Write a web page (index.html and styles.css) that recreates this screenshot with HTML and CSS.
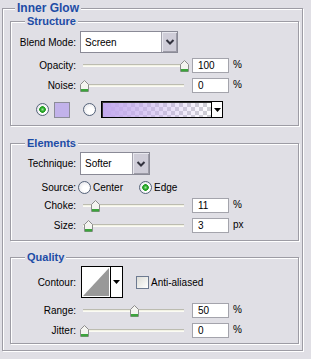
FILE: index.html
```html
<!DOCTYPE html>
<html lang="en">
<head>
    <meta charset="UTF-8">
    <meta name="viewport" content="width=device-width, initial-scale=1.0">
    <title>Inner Glow</title>
    <link rel="stylesheet" href="styles.css">
</head>
<body>
    <fieldset class="group outer">
        <legend class="outer-title">Inner Glow</legend>

        <!-- Structure -->
        <fieldset class="group inner structure">
            <legend>Structure</legend>

            <div class="row row-blend">
                <span class="lbl">Blend Mode:</span>
                <div class="select select-blend">
                    <span class="select-text">Screen</span>
                    <span class="select-btn">
                        <svg width="10" height="8" viewBox="0 0 10 8"><polyline points="1.5,2 5,5.5 8.5,2" fill="none" stroke="#33333f" stroke-width="2"/></svg>
                    </span>
                </div>
            </div>

            <div class="row row-slider">
                <span class="lbl">Opacity:</span>
                <div class="slider">
                    <div class="track"></div>
                    <svg class="thumb" style="left: 99.5px" width="9" height="12" viewBox="0 0 9 12"><polygon points="0.5,4.5 4.5,0.5 8.5,4.5 8.5,11.5 0.5,11.5" fill="#f4f4f0" stroke="#8c8c8c"/><rect x="1" y="9" width="7" height="2.5" fill="#3ca33c"/></svg>
                </div>
                <span class="num">100</span>
                <span class="unit">%</span>
            </div>

            <div class="row row-slider">
                <span class="lbl">Noise:</span>
                <div class="slider">
                    <div class="track"></div>
                    <svg class="thumb" style="left: -0.5px" width="9" height="12" viewBox="0 0 9 12"><polygon points="0.5,4.5 4.5,0.5 8.5,4.5 8.5,11.5 0.5,11.5" fill="#f4f4f0" stroke="#8c8c8c"/><rect x="1" y="9" width="7" height="2.5" fill="#3ca33c"/></svg>
                </div>
                <span class="num">0</span>
                <span class="unit">%</span>
            </div>

            <div class="row row-color">
                <span class="radio checked"></span>
                <span class="swatch"></span>
                <span class="radio radio-gradient"></span>
                <div class="gradient">
                    <span class="gradient-fill"></span>
                    <span class="drop">
                        <svg width="7" height="4" viewBox="0 0 7 4"><polygon points="0,0 7,0 3.5,4" fill="#000"/></svg>
                    </span>
                </div>
            </div>
        </fieldset>

        <!-- Elements -->
        <fieldset class="group inner elements">
            <legend>Elements</legend>

            <div class="row row-technique">
                <span class="lbl">Technique:</span>
                <div class="select select-technique">
                    <span class="select-text">Softer</span>
                    <span class="select-btn">
                        <svg width="10" height="8" viewBox="0 0 10 8"><polyline points="1.5,2 5,5.5 8.5,2" fill="none" stroke="#33333f" stroke-width="2"/></svg>
                    </span>
                </div>
            </div>

            <div class="row row-source">
                <span class="lbl lbl-source">Source:</span>
                <span class="radio"></span>
                <span class="opt">Center</span>
                <span class="radio checked radio-edge"></span>
                <span class="opt">Edge</span>
            </div>

            <div class="row row-slider">
                <span class="lbl">Choke:</span>
                <div class="slider">
                    <div class="track"></div>
                    <svg class="thumb" style="left: 10.5px" width="9" height="12" viewBox="0 0 9 12"><polygon points="0.5,4.5 4.5,0.5 8.5,4.5 8.5,11.5 0.5,11.5" fill="#f4f4f0" stroke="#8c8c8c"/><rect x="1" y="9" width="7" height="2.5" fill="#3ca33c"/></svg>
                </div>
                <span class="num">11</span>
                <span class="unit">%</span>
            </div>

            <div class="row row-slider">
                <span class="lbl">Size:</span>
                <div class="slider">
                    <div class="track"></div>
                    <svg class="thumb" style="left: 3.5px" width="9" height="12" viewBox="0 0 9 12"><polygon points="0.5,4.5 4.5,0.5 8.5,4.5 8.5,11.5 0.5,11.5" fill="#f4f4f0" stroke="#8c8c8c"/><rect x="1" y="9" width="7" height="2.5" fill="#3ca33c"/></svg>
                </div>
                <span class="num">3</span>
                <span class="unit">px</span>
            </div>
        </fieldset>

        <!-- Quality -->
        <fieldset class="group inner quality">
            <legend>Quality</legend>

            <div class="row row-contour">
                <span class="lbl">Contour:</span>
                <div class="contour">
                    <svg class="contour-curve" width="28" height="30" viewBox="0 0 28 30"><rect width="28" height="30" fill="#fff"/><polygon points="1,29 27,1 27,29" fill="#999"/></svg>
                    <span class="drop drop-contour">
                        <svg width="7" height="4" viewBox="0 0 7 4"><polygon points="0,0 7,0 3.5,4" fill="#000"/></svg>
                    </span>
                </div>
                <span class="check"></span>
                <span class="opt">Anti-aliased</span>
            </div>

            <div class="row row-slider">
                <span class="lbl">Range:</span>
                <div class="slider">
                    <div class="track"></div>
                    <svg class="thumb" style="left: 49.5px" width="9" height="12" viewBox="0 0 9 12"><polygon points="0.5,4.5 4.5,0.5 8.5,4.5 8.5,11.5 0.5,11.5" fill="#f4f4f0" stroke="#8c8c8c"/><rect x="1" y="9" width="7" height="2.5" fill="#3ca33c"/></svg>
                </div>
                <span class="num">50</span>
                <span class="unit">%</span>
            </div>

            <div class="row row-slider">
                <span class="lbl">Jitter:</span>
                <div class="slider">
                    <div class="track"></div>
                    <svg class="thumb" style="left: -0.5px" width="9" height="12" viewBox="0 0 9 12"><polygon points="0.5,4.5 4.5,0.5 8.5,4.5 8.5,11.5 0.5,11.5" fill="#f4f4f0" stroke="#8c8c8c"/><rect x="1" y="9" width="7" height="2.5" fill="#3ca33c"/></svg>
                </div>
                <span class="num">0</span>
                <span class="unit">%</span>
            </div>
        </fieldset>
    </fieldset>
</body>
</html>
```

FILE: styles.css
```css
body {
    margin: 0;
    padding-top: 2px;
    background-color: #e0dfe5;
    color: #000;
    font-family: 'Liberation Sans', Arial, sans-serif;
    font-size: 10px;
    width: 311px;
    height: 359px;
    box-sizing: border-box;
    overflow: hidden;
}

.group {
    margin: 0;
    min-width: 0;
    border: 1px solid #9d9ca4;
    box-shadow: inset 1px 1px 0 #fff, 1px 1px 0 #fff;
    box-sizing: border-box;
}

.group legend {
    padding: 0 2px;
    margin-left: 14px;
    line-height: 13px;
    height: 13px;
    font-size: 11px;
    font-weight: bold;
    color: #1d4ca6;
    background: #e0dfe5;
}

.outer {
    margin-left: 2px;
    width: 301px;
    padding: 0 3px 6px 7px;
}

.group .outer-title {
    margin-left: 5px;
    font-size: 12px;
}

.inner {
    width: 289px;
    padding: 0;
}

.structure {
    padding-bottom: 7px;
}

.elements {
    margin-top: 11px;
    padding-bottom: 7px;
}

.quality {
    margin-top: 10px;
    padding-bottom: 5px;
}

.row {
    display: flex;
    align-items: center;
}

.lbl {
    flex: none;
    width: 65px;
    margin-right: 4px;
    text-align: right;
    white-space: nowrap;
}

/* rows */
.row-blend {
    margin-top: 3px;
    height: 22px;
}

.row-slider {
    margin-top: 5px;
    height: 15px;
}

.row-color {
    margin-top: 8px;
    height: 17px;
    padding-left: 25px;
}

.row-technique {
    margin-top: 2px;
    height: 23px;
}

.row-source {
    margin-top: 5px;
    height: 14px;
}

.row-source + .row-slider {
    margin-top: 4px;
}

.row-contour {
    margin-top: 2px;
    height: 32px;
}

/* select */
.select {
    display: flex;
    height: 100%;
    box-sizing: border-box;
    border: 1px solid #8a8a96;
    background: #fff;
}

.select-blend {
    width: 98px;
}

.select-technique {
    width: 70px;
}

.select-text {
    flex: 1;
    padding-left: 4px;
    display: flex;
    align-items: center;
}

.select-btn {
    width: 15px;
    display: flex;
    align-items: center;
    justify-content: center;
    background: #cfcdd8;
    border-left: 1px solid #a4a3ae;
    box-shadow: inset 1px 1px 0 #e8e8ee, inset -1px -1px 0 #9c9ba6;
}

.select-technique .select-btn {
    width: 16px;
}

/* sliders */
.slider {
    position: relative;
    flex: none;
    width: 112px;
    height: 15px;
}

.track {
    position: absolute;
    left: 3px;
    top: 6px;
    width: 101px;
    height: 1px;
    border-top: 1px solid #bcbcb0;
    border-bottom: 1px solid #fbfbf4;
    background: #f2f2e4;
}

.thumb {
    position: absolute;
    top: 2px;
}

.num {
    flex: none;
    width: 37px;
    height: 15px;
    box-sizing: border-box;
    border: 1px solid #a4a4ac;
    background: #fff;
    padding-left: 5px;
    line-height: 13px;
}

.unit {
    margin-left: 4px;
    margin-top: -3px;
}

/* radios, swatches */
.radio {
    flex: none;
    width: 13px;
    height: 13px;
    box-sizing: border-box;
    border: 1px solid #55637a;
    border-radius: 50%;
    background: radial-gradient(circle at 60% 60%, #fff 30%, #dcdce2 100%);
}

.radio.checked {
    background:
        radial-gradient(circle, #9be59b 0, #2aa52a 2px, #21a121 3px, transparent 3.6px),
        radial-gradient(circle at 60% 60%, #fff 30%, #dcdce2 100%);
}

.swatch {
    width: 16px;
    height: 16px;
    margin-left: 5px;
    box-sizing: border-box;
    border: 1px solid #8c8c98;
    background: #c2b2ea;
}

.radio-gradient {
    margin-left: 13px;
}

.gradient {
    display: flex;
    width: 122px;
    height: 17px;
    margin-left: 5px;
    box-sizing: border-box;
    border: 1px solid #000;
    box-shadow: inset 1px 1px 0 #333;
}

.gradient-fill {
    flex: 1;
    margin: 1px 0 0 1px;
    background:
        linear-gradient(to right, #c3a9ee, rgba(195, 169, 238, 0)),
        repeating-conic-gradient(#cfcfd4 0 25%, #fff 0 50%) 0 0 / 8px 8px;
}

.drop {
    flex: none;
    width: 10px;
    display: flex;
    align-items: center;
    justify-content: center;
    border-left: 1px solid #000;
    background: #fff;
}

/* source */
.lbl-source {
    margin-right: 2px;
}

.opt {
    margin-left: 2px;
    white-space: nowrap;
}

.radio-edge {
    margin-left: 16px;
}

/* contour */
.contour {
    display: flex;
    width: 42px;
    height: 32px;
    margin-left: 1px;
    box-sizing: border-box;
    border: 1px solid #000;
}

.contour-curve {
    display: block;
}

.drop-contour {
    width: 11px;
}

.check {
    flex: none;
    width: 13px;
    height: 13px;
    margin-left: 13px;
    box-sizing: border-box;
    border: 1px solid #6d7a90;
    background: linear-gradient(135deg, #dcdcd6, #fff);
}
```
